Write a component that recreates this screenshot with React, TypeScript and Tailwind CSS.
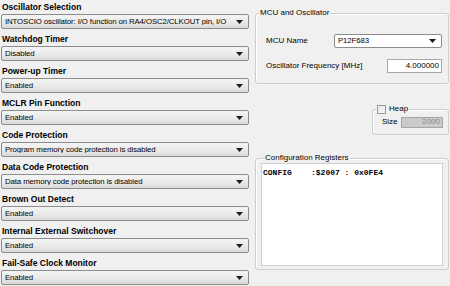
import React from 'react';

const font = { fontFamily: '"Liberation Sans", Arial, sans-serif' };

const options = [
    { label: 'Oscillator Selection', value: 'INTOSCIO oscillator: I/O function on RA4/OSC2/CLKOUT pin, I/O' },
    { label: 'Watchdog Timer', value: 'Disabled' },
    { label: 'Power-up Timer', value: 'Enabled' },
    { label: 'MCLR Pin Function', value: 'Enabled' },
    { label: 'Code Protection', value: 'Program memory code protection is disabled' },
    { label: 'Data Code Protection', value: 'Data memory code protection is disabled' },
    { label: 'Brown Out Detect', value: 'Enabled' },
    { label: 'Internal External Switchover', value: 'Enabled' },
    { label: 'Fail-Safe Clock Monitor', value: 'Enabled' },
];

const Caret: React.FC = () => (
    <svg width="7" height="4" viewBox="0 0 7 4" className="shrink-0">
        <path d="M0 0 H7 L3.5 4 Z" fill="#1a1a1a" />
    </svg>
);

const Combo: React.FC<{ value: string; className?: string }> = ({ value, className }) => (
    <div
        className={`flex items-center border border-[#8c8c8c] rounded-[2px] bg-linear-to-b from-[#f5f5f5] via-[#ebebeb] to-[#d9d9d9] pl-[3px] pr-[5px] ${className ?? ''}`}
    >
        <span className="flex-1 overflow-hidden whitespace-nowrap text-[7.8px] leading-none tracking-[-0.1px] text-black">{value}</span>
        <Caret />
    </div>
);

const App: React.FC = () => {
    return (
        <div className="w-[450px] h-[286px] bg-[#f0f0f0] flex overflow-hidden text-black" style={font}>
            {/* left: config bits */}
            <div className="w-[250px] pl-[1px] pr-[1px] flex flex-col">
                {options.map(opt => (
                    <div key={opt.label} className="flex flex-col mb-[3px]">
                        <div className="h-[14px] flex items-center pl-[1px] text-[8.5px] font-bold">{opt.label}</div>
                        <Combo value={opt.value} className="h-[15px]" />
                    </div>
                ))}
            </div>

            {/* right: mcu settings */}
            <div className="w-[194px] ml-[5px] flex flex-col">
                <fieldset className="mt-[8px] h-[76px] border border-[#cdcdcd] rounded-[3px] shadow-[inset_1px_1px_0_#fff]">
                    <legend className="ml-[3px] px-[1px] text-[8px] leading-[10px]">MCU and Oscillator</legend>
                    <div className="mt-[16px] flex items-center h-[14px] text-[8px]">
                        <span className="w-[78px] pl-[10px]">MCU Name</span>
                        <Combo value="P12F683" className="h-[14px] w-[108px] bg-none! bg-white rounded-[1px] border-[#7a7a7a]" />
                    </div>
                    <div className="mt-[11px] flex items-center h-[14px] text-[8px]">
                        <span className="w-[131px] pl-[10px] whitespace-nowrap">Oscillator Frequency [MHz]</span>
                        <div className="w-[55px] h-[14px] bg-white border border-[#a8a8a8] flex items-center justify-end pr-[2px]">4.000000</div>
                    </div>
                </fieldset>

                <fieldset className="self-end mt-[20px] w-[77px] h-[31px] border border-[#cdcdcd] rounded-[3px] shadow-[inset_1px_1px_0_#fff]">
                    <legend className="ml-[3px] px-[1px] flex items-center gap-[3px] text-[8px] leading-[10px]">
                        <span className="w-[9px] h-[9px] border border-[#9a9a9a] bg-linear-to-br from-[#e6e6e6] to-[#fafafa]" />
                        Heap
                    </legend>
                    <div className="mt-[2px] flex items-center text-[8px]">
                        <span className="pl-[9px] w-[28px]">Size</span>
                        <div className="w-[42px] h-[11px] border border-[#a5a5a5] bg-[#cacaca] text-[#8c8c8c] flex items-center justify-end pr-[2px]">2000</div>
                    </div>
                </fieldset>

                <fieldset className="mt-[18px] h-[117px] border border-[#cdcdcd] rounded-[3px] shadow-[inset_1px_1px_0_#fff] px-[5px]">
                    <legend className="ml-[3px] px-[1px] text-[8px] leading-[10px]">Configuration Registers</legend>
                    <div className="h-[103px] bg-white border border-[#d0d0d0] pl-[1px] pt-[4px]">
                        <pre className="text-[8px] font-bold leading-[10px]" style={{ fontFamily: '"Liberation Mono", "Courier New", monospace' }}>
                            {'CONFIG    :$2007 : 0x0FE4'}
                        </pre>
                    </div>
                </fieldset>
            </div>
        </div>
    );
};

export default App;
